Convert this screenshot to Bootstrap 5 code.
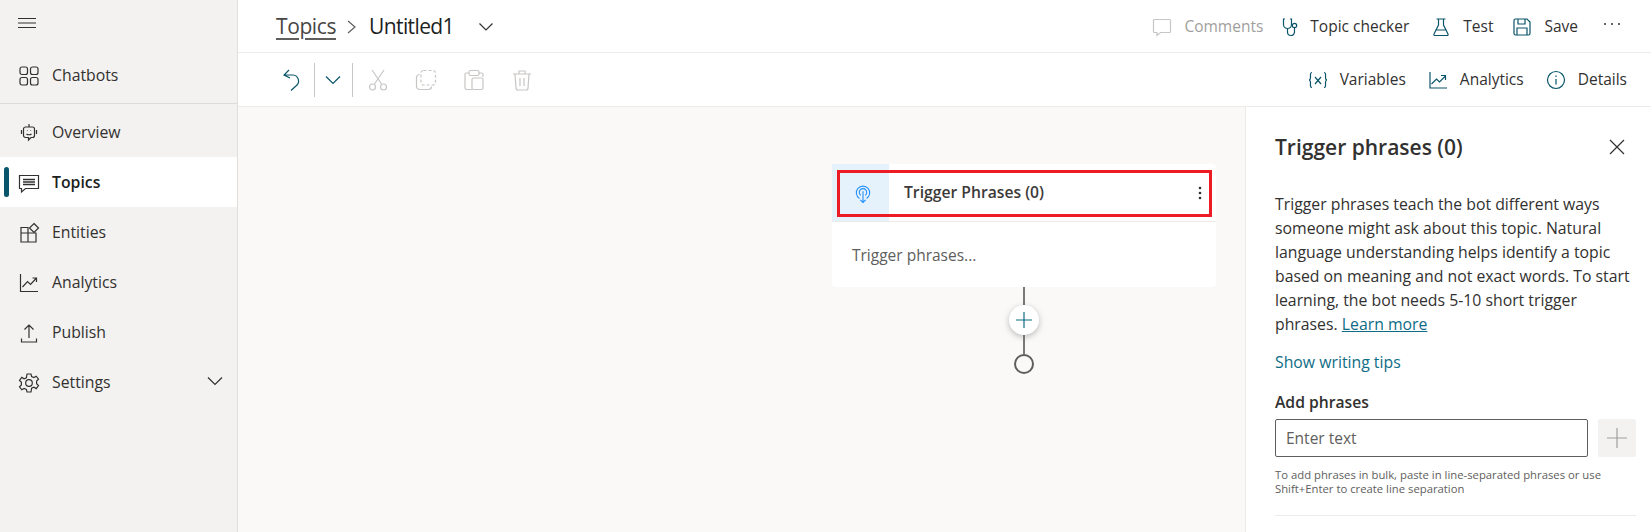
<!doctype html>
<html lang="en"><head><meta charset="utf-8"><title>Topic</title>
<link href="https://cdn.jsdelivr.net/npm/bootstrap@5.3.0/dist/css/bootstrap.min.css" rel="stylesheet">
<style>
html,body{height:532px;overflow:hidden}
body{font-family:"Open Sans","Noto Sans",sans-serif;font-size:15px;color:#323130;background:#fff}
svg{display:block;flex:none;fill:none;stroke-width:1.2}
.app-shell{width:1651px;height:532px}
.main-col{min-width:0}
.side-rail{width:238px;background:#f3f2f1;border-right:1px solid #e1dfdd;flex:none}
.rail-top{height:46px;padding:18px 0 0 18px;margin-bottom:4px}
.rail-item{height:50px;padding:2px 0 0 18px;gap:12px;color:#323130;position:relative;font-size:15.8px;letter-spacing:0}
.rail-item svg{width:22px;height:22px;stroke:#323130}
.rail-rule{border-top:1px solid #dedcda;margin:3px 0 3px}
.rail-active{background:#fff;font-weight:600;color:#201f1e}
.rail-active::before{content:"";position:absolute;left:4px;top:10px;width:5px;height:30px;border-radius:3px;background:#0b556a}
.rail-item .rail-chev{margin-left:auto;margin-right:14px;width:16px;height:16px;margin-top:-4px}
.bar-one{height:53px;border-bottom:1px solid #edebe9;padding:2px 29px 0 38px}
.bar-two{height:54px;border-bottom:1px solid #edebe9;padding:0 24px 0 44px}
.crumb-link{font-size:21px;letter-spacing:-.4px;color:#484644;text-decoration:underline;text-decoration-thickness:2px;text-decoration-color:#605e5c;text-underline-offset:4px}
.crumb-cur{font-size:21px;letter-spacing:-.6px;color:#201f1e}
.crumb-sep{margin:0 13px 0 11px}
.crumb-chev{margin-left:25px}
.act-row-a{gap:19px}
.act-row-b{gap:22px}
.act{gap:12px;font-size:15.5px;letter-spacing:0;color:#323130}
.act-tight{gap:8px;margin-right:3px}
.act svg{width:20px;height:20px;stroke:#0b556a}
.act-off{color:#a19f9d}.act-off svg{stroke:#c8c6c4}
.more-dots{margin-left:5px;margin-bottom:6px}
.tool-ico{width:22px;height:22px;stroke:#c8c6c4}
.tool-sep{width:1px;height:34px;background:#c8c6c4}
.sep-a{margin-left:12px}
.chev-b{margin:0 10px 0 9px}
.tool-group{gap:26px;margin-left:14px}
.stage{background:#faf9f8;padding-top:57px;min-width:0}
.flow-col{width:384px;margin-left:594px}
.flow-card{background:#fff;border-radius:4px;position:relative;height:123px}
.flow-head{height:58px;border-bottom:1px solid #edebe9;padding-right:14px}
.flow-ico{width:57px;height:57px;background:#e5f1fb;padding:3px 0 0 4px}
.flow-title{margin-left:15px;font-weight:600;font-size:15.7px;letter-spacing:0;color:#3b3a39}
.flow-body{padding:23px 20px;color:#605e5c;font-size:15.5px;letter-spacing:0;line-height:20px}
.red-frame{position:absolute;left:5px;top:6px;width:375px;height:47px;border:3px solid #ed1c24}
.link-line{width:2px;background:#7a7876}
.line-a{height:18px}.line-b{height:19px}
.add-dot{width:30px;height:30px;border-radius:50%;background:#fff;box-shadow:0 2px 6px rgba(0,0,0,.25)}
.end-dot{width:20px;height:20px;border-radius:50%;border:2.5px solid #605e5c;background:#faf9f8}
.side-panel{width:406px;flex:none;border-left:1px solid #edebe9;padding:26px 0 0 29px;background:#fff}
.panel-head{width:350px}
.panel-title{font-size:21px;font-weight:600;letter-spacing:0;color:#323130;line-height:28px;margin:0}
.panel-text{font-size:15.8px;letter-spacing:0;line-height:24px;margin:31px 0 0;color:#323130;white-space:nowrap}
.teal-link{color:#0f6c86}
.tips{display:block;margin-top:14px;font-size:15.8px;line-height:24px;text-decoration:none}
.add-label{font-size:15.7px;font-weight:600;line-height:20px;margin-top:18px;margin-bottom:7px}
.field-box{width:313px;height:38px;border:1px solid #605e5c;border-radius:2px;padding:0 10px;font-size:15.5px;color:#605e5c;font-family:inherit;background:#fff}
.field-box::placeholder{color:#605e5c;opacity:1}
.add-btn{width:38px;height:38px;background:#f3f2f1;border-radius:2px;border:0;margin-left:10px;padding:0}
.hint{font-size:11.3px;line-height:14px;color:#605e5c;margin-top:11px;white-space:nowrap}
.panel-rule{border-top:1px solid #edebe9;margin-top:19px;width:361px}
</style></head><body>
<div class="app-shell d-flex">
<nav class="side-rail">
 <div class="rail-top"><svg width="18" height="10" viewBox="0 0 18 10" stroke="#323130"><path d="M0 .5h18M0 5h18M0 9.500h18"/></svg></div>
 <div class="rail-item d-flex align-items-center"><svg viewBox="0 0 22 22" stroke-width="1.600"><rect x="2" y="2" width="7.500" height="7.500" rx="2"/><rect x="12.500" y="2" width="7.500" height="7.500" rx="2"/><rect x="2" y="12.500" width="7.500" height="7.500" rx="2"/><rect x="12.500" y="12.500" width="7.500" height="7.500" rx="2"/></svg>Chatbots</div>
 <div class="rail-rule"></div>
 <div class="rail-item d-flex align-items-center"><svg viewBox="0 0 22 22"><path d="M11 2v3M7.500 5h7a2 2 0 0 1 2 2v6.500a2 2 0 0 1-2 2H13l-2.500 2.500V15.500h-3a2 2 0 0 1-2-2V7a2 2 0 0 1 2-2zM3.500 8v4M18.500 8v4M8.500 12c1.200 1 3.800 1 5 0M9 8.500h.6M12.500 8.500h.6"/></svg>Overview</div>
 <div class="rail-item rail-active d-flex align-items-center"><svg viewBox="0 0 22 22"><path d="M1.500 3.500h19v13H7.500l-4 3.500v-3.500h-2z"/><path d="M5 7.500h12M5 10h12M5 12.500h12" stroke-width="1.300"/></svg>Topics</div>
 <div class="rail-item d-flex align-items-center"><svg viewBox="0 0 22 22"><path d="M3 5.500h7V11h8v9H3zM3 11h7v9M10 11V5.500"/><path d="M16 1.500l4.500 4.500-4.500 4.500L11.500 6z"/></svg>Entities</div>
 <div class="rail-item d-flex align-items-center"><svg viewBox="0 0 22 22"><path d="M2.500 2v17.500H20M4.500 15l5-5.500 3 3 6-6.500M14.500 6H18.500v4"/></svg>Analytics</div>
 <div class="rail-item d-flex align-items-center"><svg viewBox="0 0 22 22"><path d="M11 16V3M6.500 7.500 11 3l4.500 4.500M3.500 16.500v3.500h15v-3.500"/></svg>Publish</div>
 <div class="rail-item d-flex align-items-center"><svg viewBox="0 0 22 22"><circle cx="11" cy="11" r="3.300"/><path d="M9 2h4l.6 2.600 2.300 1 2.300-1.400 2.300 3-1.900 1.900v2.600l1.900 1.900-2.300 3-2.300-1.400-2.300 1L13 20H9l-.6-2.600-2.300-1-2.300 1.400-2.300-3 1.900-1.900V10.300L1.500 8.400l2.300-3 2.300 1.400 2.300-1z"/></svg>Settings<svg class="rail-chev" viewBox="0 0 16 16" stroke-width="1"><path d="M1 4.500l7 7 7-7"/></svg></div>
</nav>
<main class="main-col flex-grow-1 d-flex flex-column">
 <div class="bar-one d-flex align-items-center">
  <span class="crumb-link">Topics</span>
  <svg class="crumb-sep" width="9" height="16" viewBox="0 0 9 16" stroke="#605e5c"><path d="M1 2l7 6-7 6"/></svg>
  <span class="crumb-cur">Untitled1</span>
  <svg class="crumb-chev" width="14" height="10" viewBox="0 0 14 10" stroke="#323130"><path d="M.5 1.500l6.500 6.500 6.500-6.500"/></svg>
  <div class="act-row-a ms-auto d-flex align-items-center">
   <span class="act act-off d-flex align-items-center"><svg viewBox="0 0 20 20"><path d="M2.500 2.500h15a1 1 0 0 1 1 1v11a1 1 0 0 1-1 1h-9l-3.500 3v-3H2.500a1 1 0 0 1-1-1v-11a1 1 0 0 1 1-1z"/></svg>Comments</span>
   <span class="act act-tight d-flex align-items-center"><svg viewBox="0 0 20 20"><path d="M3 2H1.500v5.500a4 4 0 0 0 8 0V2H8M5.500 11.500V15a3.500 3.500 0 0 0 7 0v-4"/><circle cx="12.500" cy="8.500" r="2.200"/></svg>Topic checker</span>
   <span class="act d-flex align-items-center"><svg viewBox="0 0 20 20"><path d="M5.500 2h9M7.500 2v6L3 17a1 1 0 0 0 1 1.500h12a1 1 0 0 0 1-1.500L12.500 8V2M5.500 13h9"/></svg>Test</span>
   <span class="act d-flex align-items-center"><svg viewBox="0 0 20 20"><path d="M2 3.500A1.500 1.500 0 0 1 3.500 2H15l3 3v11.500a1.500 1.500 0 0 1-1.500 1.500h-13A1.500 1.500 0 0 1 2 16.500zM6 2v5h7V2M5 18v-7h10v7"/></svg>Save</span>
   <svg class="more-dots" width="20" height="6" viewBox="0 0 20 6"><circle cx="3" cy="3" r="1" fill="#323130"/><circle cx="10" cy="3" r="1" fill="#323130"/><circle cx="17" cy="3" r="1" fill="#323130"/></svg>
  </div>
 </div>
 <div class="bar-two d-flex align-items-center">
  <svg width="20" height="24" viewBox="0 0 20 24" stroke="#0b556a" stroke-width="1.500"><path d="M7 2L2 7l6 3M2 7h9a6 6 0 0 1 3.500 10.500L9 22.500"/></svg>
  <div class="tool-sep sep-a"></div>
  <svg class="chev-b" width="18" height="14" viewBox="0 0 18 14" stroke="#0b556a"><path d="M2 3.500l7 7 7-7"/></svg>
  <div class="tool-sep"></div>
  <div class="tool-group d-flex align-items-center">
   <svg class="tool-ico" viewBox="0 0 22 22"><path d="M5 1l9.500 14M17 1L7.500 15"/><circle cx="5.500" cy="18" r="3"/><circle cx="16.500" cy="18" r="3"/></svg>
   <svg class="tool-ico" viewBox="0 0 22 22"><rect x="6" y="1.500" width="14.500" height="14.500" rx="2.500" stroke-dasharray="3 2"/><path d="M4.500 5.500A3 3 0 0 0 1.500 8.500V17a3.500 3.500 0 0 0 3.500 3.500h8.500a3 3 0 0 0 3-3"/></svg>
   <svg class="tool-ico" viewBox="0 0 22 22"><path d="M6 4H3.500A1.500 1.500 0 0 0 2 5.500V19a1.500 1.500 0 0 0 1.500 1.500H9M16 4h2.500A1.500 1.500 0 0 1 20 5.500V8"/><rect x="6" y="1.500" width="10" height="5" rx="1.500"/><rect x="9" y="9" width="11" height="11.500" rx="1.500"/></svg>
   <svg class="tool-ico" viewBox="0 0 22 22"><path d="M2 5h18M8 5V2h6v3M4 5l1 14a2 2 0 0 0 2 2h8a2 2 0 0 0 2-2l1-14M9 9v8M13 9v8"/></svg>
  </div>
  <div class="act-row-b ms-auto d-flex align-items-center">
   <span class="act d-flex align-items-center"><svg viewBox="0 0 20 20" stroke-width="1.100"><path d="M4 2.500C2 2.500 2.500 5 2.500 7c0 2-1 3-1.500 3 .5 0 1.500 1 1.500 3 0 2-.5 4.500 1.500 4.500M16 2.500c2 0 1.500 2.500 1.500 4.500 0 2 1 3 1.500 3-.5 0-1.500 1-1.500 3 0 2 .5 4.500-1.500 4.500M7 7l6 7M13 7l-6 7"/></svg>Variables</span>
   <span class="act d-flex align-items-center"><svg viewBox="0 0 20 20"><path d="M2 2v16h17M3.500 14l5-5 3 3 6-6M13 5.500h4.500V10"/></svg>Analytics</span>
   <span class="act d-flex align-items-center"><svg viewBox="0 0 20 20"><circle cx="10" cy="10" r="8.500"/><path d="M10 9v5.500M10 5.500v1.500"/></svg>Details</span>
  </div>
 </div>
 <div class="flex-grow-1 d-flex">
  <section class="stage flex-grow-1">
   <div class="flow-col d-flex flex-column align-items-center">
    <div class="flow-card w-100">
     <div class="flow-head d-flex align-items-center">
      <div class="flow-ico d-flex align-items-center justify-content-center"><svg width="16" height="20" viewBox="0 0 18 20" stroke="#1f8fff" stroke-width="1.600"><path d="M5 15A7.500 7.500 0 1 1 13 15M6.500 11.500a4.200 4.200 0 1 1 5 0M9 7v12M6 16.500l3 3 3-3"/></svg></div>
      <span class="flow-title">Trigger Phrases (0)</span>
      <svg class="ms-auto" width="4" height="14" viewBox="0 0 4 14"><circle cx="2" cy="2" r="1.300" fill="#323130"/><circle cx="2" cy="7" r="1.300" fill="#323130"/><circle cx="2" cy="12" r="1.300" fill="#323130"/></svg>
     </div>
     <div class="flow-body">Trigger phrases...</div>
     <div class="red-frame"></div>
    </div>
    <div class="link-line line-a"></div>
    <div class="add-dot d-flex align-items-center justify-content-center"><svg width="16" height="16" viewBox="0 0 16 16" stroke="#0f6c86"><path d="M8 0v16M0 8h16"/></svg></div>
    <div class="link-line line-b"></div>
    <div class="end-dot"></div>
   </div>
  </section>
  <aside class="side-panel">
   <div class="panel-head d-flex align-items-center justify-content-between">
    <h2 class="panel-title">Trigger phrases (0)</h2>
    <svg width="16" height="16" viewBox="0 0 16 16" stroke="#323130"><path d="M1 1l14 14M15 1L1 15"/></svg>
   </div>
   <p class="panel-text">Trigger phrases teach the bot different ways<br>someone might ask about this topic. Natural<br>language understanding helps identify a topic<br>based on meaning and not exact words. To start<br>learning, the bot needs 5-10 short trigger<br>phrases. <a class="teal-link" href="#">Learn more</a></p>
   <a class="tips teal-link" href="#">Show writing tips</a>
   <div class="add-label">Add phrases</div>
   <div class="d-flex">
    <input class="field-box" type="text" placeholder="Enter text">
    <button class="add-btn d-flex align-items-center justify-content-center" type="button"><svg width="20" height="20" viewBox="0 0 20 20" stroke="#a19f9d"><path d="M10 0v20M0 10h20"/></svg></button>
   </div>
   <div class="hint">To add phrases in bulk, paste in line-separated phrases or use<br>Shift+Enter to create line separation</div>
   <div class="panel-rule"></div>
  </aside>
 </div>
</main>
</div>
</body></html>
